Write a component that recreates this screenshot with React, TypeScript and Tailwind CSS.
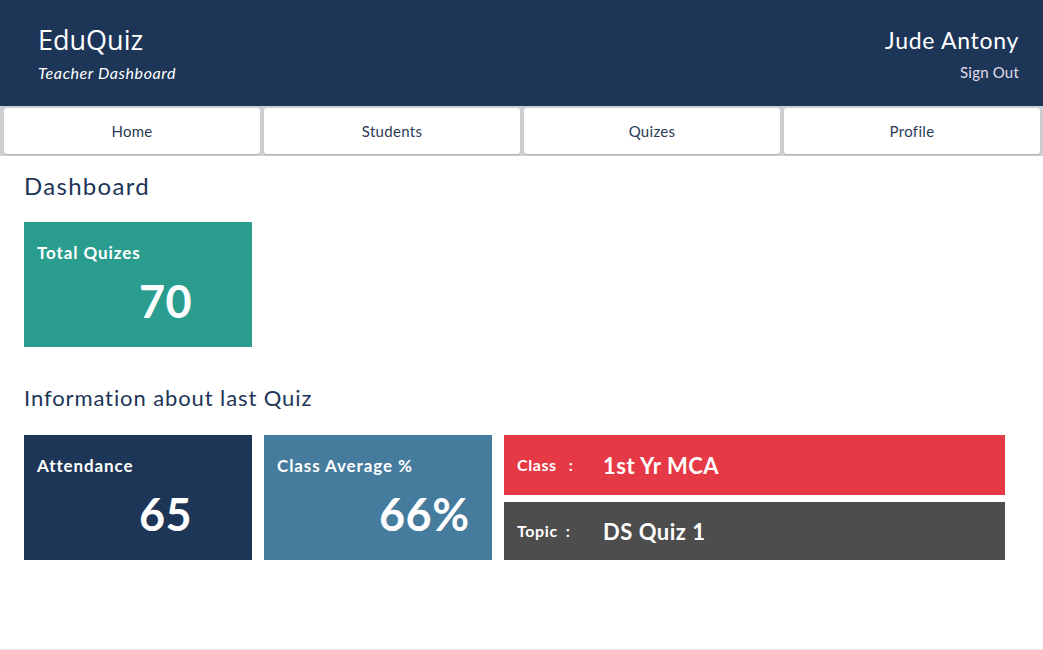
const font = { fontFamily: "Lato, 'Open Sans', sans-serif" };

const navItems = ["Home", "Students", "Quizes", "Profile"];

const StatCard = ({
  title,
  value,
  color,
}: {
  title: string;
  value: string;
  color: string;
}) => {
  return (
    <div className={`w-[228px] h-[125px] ${color} text-white pl-[13px] pt-[21px]`}>
      <div className="text-[17px] font-bold leading-[20px] tracking-[0.9px]">{title}</div>
      <div className="pl-[102px] mt-[13px] text-[45px] font-bold leading-[50px] tracking-[0.5px]">
        {value}
      </div>
    </div>
  );
};

const InfoBar = ({
  label,
  gap,
  value,
  color,
  h,
}: {
  label: string;
  gap: string;
  value: string;
  color: string;
  h: string;
}) => {
  return (
    <div className={`flex items-center w-[501px] ${h} ${color} text-white px-[13px]`}>
      <div className="w-[86px] text-[16px] font-bold tracking-[0.6px]">
        {label}
        <span className={gap}>:</span>
      </div>
      <div className="text-[22px] font-bold tracking-[0.5px]">{value}</div>
    </div>
  );
};

const App = () => {
  return (
    <div className="flex flex-col h-[650px] bg-white" style={font}>
      <header className="flex justify-between h-[106px] bg-[#1d3557] pl-[38px] pr-[24px] pt-[23px] text-white">
        <div>
          <div
            className="text-[27px] leading-[34px]"
            style={{ fontFamily: "'Open Sans', sans-serif" }}
          >
            EduQuiz
          </div>
          <div className="mt-[7px] text-[16px] italic leading-[18px] tracking-[0.6px]">
            Teacher Dashboard
          </div>
        </div>
        <div className="text-right">
          <div className="mt-[3px] text-[23px] leading-[28px] tracking-[0.7px]">
            Jude Antony
          </div>
          <div className="mt-[9px] text-[15px] leading-[18px] text-[#e2dbe8] tracking-[0.2px]">
            Sign Out
          </div>
        </div>
      </header>

      <nav className="flex gap-[4px] h-[50px] bg-[#cfcfd3] pl-[4px] pr-[3px] py-[2px]">
        {navItems.map((item) => (
          <button
            key={item}
            className="w-[256px] h-[46px] rounded-[3px] bg-white text-[15px] text-[#2b3a55] tracking-[0.3px] shadow-[0_1px_1px_rgba(0,0,0,0.15)]"
          >
            {item}
          </button>
        ))}
      </nav>

      <main className="flex-1 px-[24px]">
        <h1 className="mt-[15px] text-[24px] leading-[30px] text-[#1d3557] tracking-[1.3px]">
          Dashboard
        </h1>
        <div className="mt-[21px]">
          <StatCard title="Total Quizes" value="70" color="bg-[#2a9d8f]" />
        </div>

        <h2 className="mt-[38px] text-[22px] leading-[26px] text-[#1d3557] tracking-[0.9px]">
          Information about last Quiz
        </h2>
        <div className="flex gap-[12px] mt-[24px]">
          <StatCard title="Attendance" value="65" color="bg-[#1d3557]" />
          <StatCard title="Class Average %" value="66%" color="bg-[#457b9d]" />
          <div className="flex flex-col gap-[7px]">
            <InfoBar label="Class" gap="ml-[12px]" value="1st Yr MCA" color="bg-[#e63946]" h="h-[60px]" />
            <InfoBar label="Topic" gap="ml-[8px]" value="DS Quiz 1" color="bg-[#4d4d4d]" h="h-[58px]" />
          </div>
        </div>
      </main>

      <footer className="h-[1px] border-t border-[#e6e6e6]" />
    </div>
  );
};

export default App;
